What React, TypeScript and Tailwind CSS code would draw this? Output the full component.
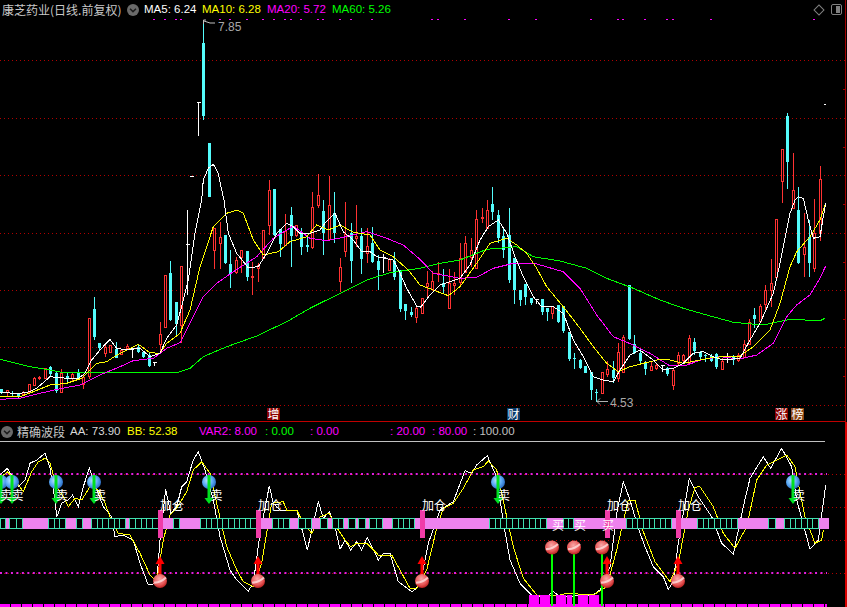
import * as React from 'react';

type Kind = 'r' | 'c' | 'w';
// x, wick top, body top, body bottom, wick bottom (3x crop units, y measured from 200)
type Candle = [number, number, number, number, number, Kind];
type Pt = [number, number];

const CYAN = '#54fcfc';
const RED = '#ff3232';
const CJK = "font-['Noto_Sans_CJK_SC','Liberation_Sans',sans-serif]";
const SANS = "font-['Liberation_Sans','Noto_Sans_CJK_SC',sans-serif]";

const leftCandles: Candle[] = [
  [5, 567, 567, 580, 582, 'c'], [22, 570, 571, 576, 590, 'r'], [38, 572, 578, 580, 590, 'c'], [55, 578, 580, 590, 595, 'c'],
  [70, 574, 575, 582, 584, 'r'], [87, 552, 552, 576, 578, 'r'], [103, 532, 534, 554, 556, 'r'], [118, 527, 531, 535, 540, 'r'],
  [136, 505, 505, 533, 535, 'r'], [151, 497, 502, 522, 530, 'c'], [169, 515, 520, 574, 578, 'c'], [185, 508, 520, 575, 577, 'r'],
  [202, 517, 528, 535, 545, 'c'], [217, 520, 522, 535, 545, 'r'], [235, 507, 520, 535, 540, 'c'], [250, 522, 530, 552, 567, 'r'],
  [267, 355, 355, 528, 537, 'r'], [283, 291, 327, 410, 420, 'c'], [298, 430, 430, 445, 453, 'c'], [316, 430, 441, 460, 471, 'r'],
  [331, 435, 435, 455, 456, 'r'], [349, 425, 447, 473, 473, 'c'], [364, 450, 450, 463, 465, 'r'], [382, 432, 438, 445, 450, 'r'],
  [397, 445, 445, 447, 473, 'w'], [415, 434, 441, 455, 460, 'c'], [430, 452, 455, 470, 475, 'c'], [448, 460, 465, 497, 500, 'c'],
  [464, 487, 487, 489, 498, 'w'], [481, 366, 403, 432, 460, 'r'], [496, 225, 225, 380, 381, 'r'], [511, 183, 219, 360, 362, 'c'],
  [529, 305, 305, 372, 410, 'c'], [545, 198, 198, 375, 430, 'r'], [562, 30, 132, 133, 285, 'w'], [575, -72, -72, -71, -71, 'w'],
  [595, -293, -293, -292, -193, 'w'], [610, -540, -472, -252, -240, 'c'], [628, -171, -171, -10, -10, 'c'], [643, 85, 85, 150, 207, 'r'],
  [660, 65, 112, 130, 207, 'r'], [676, 105, 105, 190, 192, 'c'], [691, 150, 192, 222, 263, 'c'], [709, 172, 180, 215, 222, 'r'],
  [725, 150, 150, 170, 220, 'r'], [742, 153, 153, 230, 242, 'c'], [758, 185, 228, 232, 285, 'r'], [775, 190, 195, 205, 245, 'r'],
  [790, 91, 91, 175, 177, 'r'], [808, -59, -30, 75, 105, 'r'], [823, -33, -33, 105, 107, 'c'], [841, 88, 88, 132, 172, 'c'],
  [857, 42, 92, 135, 137, 'r'], [873, 22, 45, 108, 200, 'c'], [889, 75, 75, 105, 110, 'r'], [905, 85, 95, 140, 165, 'c'],
  [922, 105, 135, 140, 157, 'c'], [938, -24, 22, 140, 147, 'r'], [955, -78, -15, 15, 25, 'r'], [970, 0, 33, 100, 165, 'c'],
  [988, -72, 15, 118, 122, 'r'], [1003, -24, 40, 98, 130, 'c'], [1020, 175, 200, 242, 275, 'r'], [1036, 5, 103, 153, 170, 'r'],
  [1053, 70, 100, 182, 250, 'c'], [1069, 15, 107, 113, 140, 'r'], [1085, 85, 107, 177, 222, 'c'], [1102, 85, 138, 158, 190, 'r'],
  [1118, 82, 130, 185, 190, 'c'], [1135, 165, 183, 210, 270, 'c'], [1150, 163, 170, 172, 218, 'w'], [1168, 175, 178, 210, 212, 'r'],
  [1184, 155, 183, 232, 240, 'c'], [1201, 210, 210, 327, 336, 'c'], [1217, 312, 312, 332, 360, 'c'], [1234, 322, 335, 345, 350, 'c'],
  [1250, 320, 325, 350, 368, 'r'],
];

const rightCandles: Candle[] = [
  [7, 293, 293, 340, 342, 'r'], [22, 212, 250, 258, 295, 'r'], [38, 212, 242, 267, 270, 'r'], [55, 187, 218, 220, 245, 'r'],
  [70, 208, 250, 262, 278, 'c'], [88, 208, 250, 323, 324, 'r'], [103, 215, 250, 256, 285, 'r'], [120, 130, 175, 245, 262, 'r'],
  [136, 107, 130, 215, 217, 'r'], [153, 115, 150, 170, 200, 'r'], [169, 30, 57, 205, 208, 'r'], [186, 25, 50, 55, 70, 'r'],
  [202, 0, 30, 85, 86, 'r'], [217, -39, 12, 35, 60, 'c'], [235, 30, 45, 113, 130, 'c'], [250, 80, 108, 150, 175, 'c'],
  [268, 25, 105, 240, 250, 'c'], [283, 175, 175, 270, 313, 'c'], [300, 270, 270, 300, 318, 'c'], [316, 252, 252, 290, 315, 'c'],
  [333, 293, 293, 310, 315, 'c'], [350, 297, 297, 298, 312, 'w'], [366, 297, 297, 335, 345, 'c'], [382, 323, 323, 335, 362, 'c'],
  [397, 318, 318, 340, 358, 'r'], [415, 315, 315, 365, 368, 'c'], [430, 318, 318, 393, 400, 'c'], [448, 397, 397, 478, 482, 'c'],
  [463, 460, 475, 478, 508, 'c'], [481, 478, 480, 505, 508, 'c'], [496, 497, 497, 518, 520, 'c'], [514, 516, 516, 570, 600, 'c'],
  [529, 568, 575, 580, 605, 'c'], [547, 517, 517, 578, 582, 'r'], [562, 483, 508, 522, 530, 'r'], [580, 483, 510, 535, 548, 'c'],
  [595, 430, 457, 535, 545, 'r'], [611, 405, 410, 515, 518, 'r'], [628, 256, 256, 418, 420, 'c'], [643, 405, 433, 458, 462, 'c'],
  [661, 448, 460, 483, 488, 'c'], [676, 483, 490, 508, 525, 'c'], [694, 485, 497, 510, 511, 'r'], [710, 490, 495, 505, 510, 'r'],
  [727, 495, 495, 496, 515, 'w'], [742, 500, 505, 523, 527, 'c'], [760, 505, 510, 555, 570, 'r'], [775, 455, 465, 490, 495, 'r'],
  [790, 462, 465, 480, 485, 'r'], [808, 405, 415, 490, 495, 'r'], [823, 415, 427, 452, 465, 'c'], [841, 452, 455, 472, 480, 'c'],
  [856, 462, 465, 467, 485, 'c'], [874, 462, 467, 482, 485, 'c'], [889, 460, 462, 502, 507, 'c'], [907, 475, 482, 507, 508, 'r'],
  [922, 460, 470, 472, 490, 'w'], [940, 465, 470, 480, 495, 'c'], [955, 460, 465, 480, 487, 'r'], [973, 420, 432, 470, 475, 'r'],
  [988, 358, 367, 432, 435, 'r'], [1003, 323, 345, 357, 385, 'c'], [1021, 312, 317, 363, 365, 'r'], [1036, 255, 270, 312, 335, 'r'],
  [1053, 178, 250, 270, 320, 'r'], [1069, 58, 58, 230, 235, 'r'], [1087, -152, -152, -56, 10, 'r'], [1102, -260, -252, -114, -33, 'c'],
  [1120, -140, -29, 25, 27, 'r'], [1135, -39, 30, 190, 192, 'c'], [1153, 40, 142, 163, 230, 'r'], [1168, 60, 110, 190, 230, 'c'],
  [1184, -3, 100, 205, 215, 'r'], [1201, -102, -63, 100, 122, 'r'],
];

const ma5: Pt[] = [
  ...scale(0, 200, [[0,578],[60,580],[90,575],[110,565],[150,530],[200,535],[235,535],[255,520],[275,480],[300,450],[330,418],[350,445],[380,450],[420,445],[450,470],[480,460],[500,415],[530,375],[550,300],[565,240],[585,100],[605,0]]),
  ...scale(0, 0, [[610,540],[625,505],[640,493],[655,520],[665,570],[672,600]]),
  ...scale(0, 200, [[685,100],[710,160],[745,203],[775,200],[800,160],[830,100],[860,70],[880,80],[900,100],[930,100],[960,90],[975,70],[1005,40],[1030,95],[1060,120],[1085,155],[1110,155],[1130,170],[1180,180],[1200,220],[1220,265],[1250,318],[1260,318]]),
  ...scale(420, 200, [[0,325],[30,285],[60,255],[90,245],[120,235],[150,195],[180,120],[205,80],[235,60],[260,100],[285,170],[310,230],[340,290],[365,320],[400,320],[430,340],[460,420],[490,470],[520,530],[550,540],[580,545],[600,510],[630,465],[660,450],[700,480],[730,510],[760,505],[790,490],[820,460],[850,455],[880,470],[910,480],[960,475],[990,420],[1020,370],[1060,280],[1080,190],[1110,40],[1125,0],[1135,-10],[1150,-5],[1165,60],[1180,115],[1200,110],[1210,50],[1217,10]]),
];
const ma10: Pt[] = [
  ...scale(0, 200, [[0,590],[60,590],[100,575],[150,555],[200,550],[245,535],[290,490],[320,485],[350,465],[415,433],[450,458],[480,460],[500,430],[540,400],[570,330],[600,200],[640,80],[680,40],[710,30],[730,40],[760,120],[790,165],[835,155],[870,125],[920,110],[950,75],[985,90],[1020,75],[1060,97],[1110,105],[1140,150],[1180,170],[1225,210],[1260,255]]),
  ...scale(420, 200, [[40,270],[85,287],[120,260],[170,190],[210,130],[260,115],[290,135],[320,160],[350,205],[380,260],[430,320],[480,385],[520,440],[560,490],[595,515],[630,500],[670,490],[720,478],[750,480],[790,490],[840,480],[880,472],[960,468],[1000,440],[1050,390],[1080,310],[1110,200],[1130,155],[1170,110],[1200,60],[1217,8]]),
];
const ma20: Pt[] = [
  ...scale(0, 200, [[0,598],[60,595],[120,580],[180,566],[240,555],[300,525],[360,500],[400,482],[460,475],[500,445],[540,428],[570,370],[610,290],[650,250],[700,215],[770,170],[820,115],[880,78],[930,115],[980,122],[1030,112],[1100,95],[1160,115],[1210,135],[1260,178]]),
  ...scale(420, 200, [[40,220],[120,235],[170,232],[220,205],[280,190],[350,192],[430,215],[480,265],[530,345],[580,410],[640,435],[690,460],[750,498],[800,495],[850,478],[900,470],[960,477],[1010,465],[1060,430],[1100,350],[1130,315],[1170,285],[1200,235],[1217,198]]),
];
const ma60: Pt[] = [
  ...scale(0, 200, [[0,478],[90,500],[150,510],[190,518],[490,518],[530,518],[570,505],[610,470],[680,440],[770,408],[860,365],[930,325],[1010,285],[1100,240],[1170,218],[1260,205]]),
  ...scale(420, 200, [[60,190],[120,180],[200,148],[290,140],[340,170],[420,183],[500,205],[560,235],[640,265],[720,300],[790,325],[860,345],[940,367],[1030,375],[1110,358],[1200,362],[1215,355]]),
];

const aa: Pt[] = [
  ...scale(0, 400, [[0,225],[22,205],[40,235],[55,260],[75,240],[90,190],[110,180],[135,160],[150,205],[165,300],[170,352],[185,310],[205,300],[218,285],[235,320],[250,260],[268,205],[285,255],[310,320],[335,350],[345,410],[370,405],[400,420],[420,490],[445,555],[470,550],[480,420],[497,268],[512,340],[530,320],[545,260],[560,245],[580,180],[595,155],[615,210],[640,300],[660,410],[690,510],[710,540],[745,573],[760,550],[780,400],[808,258],[820,310],[840,330]]),
  ...scale(280, 400, [[20,330],[50,330],[65,385],[82,450],[115,305],[130,355],[148,335],[165,380],[180,448],[195,420],[212,450],[230,425],[245,450],[262,412],[295,480],[310,460],[330,460],[355,545],[395,575],[410,565],[425,530],[445,430],[480,330],[520,305],[555,212],[575,220],[590,195],[622,167],[645,220],[660,300],[675,395],[690,480],[720,550],[760,590],[800,590],[820,575]]),
  ...scale(560, 400, [[0,590],[100,585],[120,570],[150,500],[170,340],[190,245],[210,300],[235,385],[255,440],[280,500],[310,530],[325,568],[340,545],[355,430],[388,235],[415,290],[455,350],[485,430],[520,462],[550,320],[570,235],[610,170],[632,205],[665,145],[695,200],[710,300],[750,448],[775,420],[797,255]]),
];
const bb: Pt[] = [
  ...scale(0, 400, [[0,235],[22,215],[40,235],[70,275],[95,215],[115,185],[135,175],[150,190],[170,260],[190,290],[205,320],[225,295],[245,300],[270,260],[295,270],[315,310],[330,350],[355,400],[390,405],[420,460],[450,525],[470,545],[490,420],[510,345],[530,325],[560,275],[580,210],[605,185],[630,220],[650,310],[680,440],[710,510],[730,545],[760,560],[785,490],[815,310],[850,305]]),
  ...scale(280, 400, [[20,330],[50,330],[65,360],[95,400],[120,350],[148,340],[165,375],[195,420],[212,440],[230,430],[260,430],[295,465],[335,465],[390,565],[410,565],[440,510],[470,385],[490,325],[520,310],[550,265],[580,210],[610,200],[625,183],[650,210],[680,350],[700,440],[730,535],[770,585],[840,585]]),
  ...scale(560, 400, [[20,580],[100,585],[140,560],[170,450],[205,300],[225,300],[250,395],[285,485],[330,545],[355,490],[385,330],[405,262],[420,260],[460,320],[490,400],[525,445],[560,380],[590,240],[620,195],[680,165],[705,200],[735,350],[765,430],[785,420],[790,390]]),
];

const dots = [154, 165, 176, 181, 220, 230, 247, 263, 274, 285, 291, 301, 318, 323, 340, 351, 372, 432, 438, 465, 509, 536, 591, 618, 623, 645, 667, 673, 711, 814];
// start, end, number of cells
const cells: [number, number, number][] = [
  [0, 5, 1], [9, 22, 2], [48, 65, 3], [76, 82, 1], [91, 125, 6], [129, 158, 5], [173, 179, 1], [200, 256, 10], [272, 289, 3],
  [298, 311, 2], [320, 327, 1], [332, 343, 2], [348, 355, 1], [358, 365, 1], [369, 382, 2], [392, 414, 4], [489, 546, 10],
  [563, 573, 2], [626, 671, 8], [697, 737, 7], [768, 775, 1], [784, 818, 6],
];
const addBars = [158, 256, 420, 605, 676];
const addLabels = [160, 258, 422, 607, 678];
const redBalls = [160, 258, 422, 607, 678];
const blueBalls = [1, 12, 56, 94, 209, 498, 793];
const sellLabels = [0, 11.5, 56, 94, 210.5, 498, 793];
const buyPins = [552, 574, 602];
const volBlocks: [number, number][] = [[529, 10], [540, 10], [556, 10], [567, 5], [578, 10], [589, 10]];

function scale(ox: number, oy: number, pts: Pt[]): Pt[] {
  return pts.map(([x, y]) => [ox + x / 3, oy + y / 3]);
}

const toPoints = (pts: Pt[]) => pts.map(([x, y]) => `${x.toFixed(1)},${y.toFixed(1)}`).join(' ');

function Chevron({ className }: { className: string }) {
  return (
    <svg viewBox="0 0 12 12" className={className}>
      <circle cx="6" cy="6" r="6" fill="#6a6a6a" />
      <path d="M3 4.8 L6 7.6 L9 4.8" fill="none" stroke="#1c1c1c" strokeWidth="1.5" />
    </svg>
  );
}

function Line({ pts, color }: { pts: Pt[]; color: string }) {
  return <polyline points={toPoints(pts)} fill="none" stroke={color} strokeWidth="1" shapeRendering="crispEdges" />;
}

function CandleMark({ c, ox }: { c: Candle; ox: number }) {
  const [zx, wt, bt, bb2, wb, kind] = c;
  const x = Math.floor(ox + zx / 3) + 0.5;
  const y = (v: number) => Math.round(200 + v / 3);
  const color = kind === 'r' ? RED : kind === 'c' ? CYAN : '#ffffff';
  return (
    <g shapeRendering="crispEdges">
      <line x1={x} x2={x} y1={y(wt)} y2={y(wb)} stroke={color} />
      {kind === 'c' && <rect x={x - 1.5} y={y(bt)} width={3} height={Math.max(1, y(bb2) - y(bt))} fill={color} />}
      {kind === 'r' && <rect x={x - 1} y={y(bt) + 0.5} width={2} height={Math.max(1, y(bb2) - y(bt))} fill="#000" stroke={color} />}
      {kind === 'w' && <line x1={x - 2} x2={x + 2} y1={y(bt) + 0.5} y2={y(bt) + 0.5} stroke={color} />}
    </g>
  );
}

function TopChart() {
  const gridY = [60.5, 118.5, 175.5, 233.5, 290.5, 347.5, 405.5];
  return (
    <svg viewBox="0 19 845 402" className="block w-[845px] h-[402px]">
      {gridY.map((y) => (
        <line key={y} x1="0" x2="845" y1={y} y2={y} stroke="#b00000" strokeDasharray="1 3" />
      ))}
      {[89.5, 147.5, 204.5, 262.5, 319.5, 376.5].map((y) => (
        <line key={y} x1="843" x2="845" y1={y} y2={y} stroke="#a00000" />
      ))}
      {dots.map((x) => (
        <rect key={x} x={x - 1} y="18" width="2" height="2" fill="#ff00ff" />
      ))}
      {leftCandles.map((c, i) => <CandleMark key={i} c={c} ox={0} />)}
      {rightCandles.map((c, i) => <CandleMark key={i} c={c} ox={420} />)}
      <rect x="824" y="104" width="2" height="1" fill="#fff" />
      <Line pts={ma60} color="#00ff00" />
      <Line pts={ma20} color="#ff00ff" />
      <Line pts={ma10} color="#ffff00" />
      <Line pts={ma5} color="#ffffff" />

      <path d="M203.5 24 V20 H206 M204 21 L210 23 L215 23" fill="none" stroke="#c0c0c0" />
      <text x="218" y="31" fontSize="12" fill="#a8a8a8" className={SANS}>7.85</text>
      <path d="M608 401.5 H597 M600 398.5 L597 401.5 L600 404.5" fill="none" stroke="#b0b0b0" />
      <text x="610" y="407" fontSize="12" fill="#a8a8a8" className={SANS}>4.53</text>

      <Tag x={267} text="增" bg="#8b0000" />
      <Tag x={507} text="财" bg="#0a3a6a" />
      <Tag x={775} text="涨" bg="#8b0000" />
      <Tag x={791} text="榜" bg="#8b4513" />
    </svg>
  );
}

function Tag({ x, text, bg }: { x: number; text: string; bg: string }) {
  return (
    <g>
      <rect x={x} y="408" width="13" height="12" fill={bg} />
      <text x={x + 0.5} y="418.5" fontSize="12" fill="#fff" className={CJK}>{text}</text>
    </g>
  );
}

function RedBall({ x, y }: { x: number; y: number }) {
  return (
    <g>
      <circle cx={x} cy={y} r="7" fill="url(#redBall)" />
      <path d={`M${x - 6} ${y + 1.5} Q${x} ${y + 2} ${x + 6} ${y - 3.5}`} fill="none" stroke="#ffe4e4" strokeWidth="2.2" opacity="0.75" />
    </g>
  );
}

function BottomChart() {
  return (
    <svg viewBox="0 442 845 165" className="block w-[845px] h-[165px]">
      <defs>
        <radialGradient id="redBall" cx="45%" cy="35%" r="65%">
          <stop offset="0%" stopColor="#f8a8a8" />
          <stop offset="65%" stopColor="#e85858" />
          <stop offset="100%" stopColor="#b82020" />
        </radialGradient>
        <radialGradient id="blueBall" cx="40%" cy="40%" r="65%">
          <stop offset="0%" stopColor="#b8e4ff" />
          <stop offset="55%" stopColor="#5aa8f4" />
          <stop offset="100%" stopColor="#2868c0" />
        </radialGradient>
      </defs>

      {[474.5, 507.5, 540.5, 573.5].map((y) => (
        <line key={y} x1="0" x2="845" y1={y} y2={y} stroke="#b00000" strokeDasharray="1 3" />
      ))}
      {[474, 573].map((y) => (
        <line key={y} x1="0" x2="827" y1={y} y2={y} stroke="#e020e0" strokeWidth="2" strokeDasharray="2 3.47" />
      ))}

      <Line pts={aa} color="#ffffff" />
      <Line pts={bb} color="#ffff00" />

      <line x1="0" x2="827" y1="605.5" y2="605.5" stroke="#ff00ff" strokeWidth="3" strokeDasharray="10 1" />
      {volBlocks.map(([x, w]) => (
        <rect key={x} x={x} y="595" width={w} height="12" fill="#ff00ff" />
      ))}

      <rect x="0" y="518" width="829" height="11" fill="#ee82ee" />
      {cells.map(([start, end, n]) => (
        <g key={start} shapeRendering="crispEdges">
          <rect x={start + 0.5} y="518.5" width={end - start} height="10" fill="#000" stroke="#40e0b0" />
          {Array.from({ length: n - 1 }, (_, i) => {
            const x = Math.round(start + ((end - start) / n) * (i + 1)) + 0.5;
            return <line key={i} x1={x} x2={x} y1="518" y2="529" stroke="#40e0b0" />;
          })}
        </g>
      ))}
      {addBars.map((x) => (
        <rect key={x} x={x} y="510" width="5" height="28" fill="#f03ca8" />
      ))}

      {addLabels.map((x) => (
        <text key={x} x={x} y="510" fontSize="12" fill="#fff" className={CJK}>加仓</text>
      ))}
      {buyPins.map((x) => (
        <g key={x}>
          <line x1={x} x2={x} y1="541" y2="606" stroke="#00ff00" strokeWidth="2" />
          <RedBall x={x} y={547.5} />
        </g>
      ))}
      {[552, 574, 602].map((x) => (
        <text key={x} x={x} y="529.5" fontSize="12" fill="#fff" className={CJK}>买</text>
      ))}
      {redBalls.map((x) => (
        <g key={x}>
          <path d={`M${x - 1.5} 575 V564 H${x - 4.5} L${x} 556 L${x + 4.5} 564 H${x + 1.5} V575 Z`} fill="#ff0000" />
          <RedBall x={x} y={581} />
        </g>
      ))}
      {blueBalls.map((x) => (
        <g key={x}>
          <circle cx={x} cy="482" r="7" fill="url(#blueBall)" />
          <path d={`M${x - 1.5} 475 V498 H${x - 4.5} L${x} 504 L${x + 4.5} 498 H${x + 1.5} V475 Z`} fill="#00e020" />
        </g>
      ))}
      {sellLabels.map((x) => (
        <text key={x} x={x} y="499.5" fontSize="12" fill="#fff" className={CJK}>卖</text>
      ))}
    </svg>
  );
}

export default function App() {
  const legend = [
    { text: 'MA5: 6.24', cls: 'w-[58px] text-white' },
    { text: 'MA10: 6.28', cls: 'w-[65px] text-[#ffff00]' },
    { text: 'MA20: 5.72', cls: 'w-[65px] text-[#ff00ff]' },
    { text: 'MA60: 5.26', cls: 'w-[65px] text-[#00ff00]' },
  ];
  const lower = [
    { text: 'AA: 73.90', cls: 'w-[57px] text-[#d8d8d8]' },
    { text: 'BB: 52.38', cls: 'w-[72px] text-[#ffff00]' },
    { text: 'VAR2: 8.00', cls: 'w-[66px] text-[#ff00ff]' },
    { text: ': 0.00', cls: 'w-[45px] text-[#00ff00]' },
    { text: ': 0.00', cls: 'w-[80px] text-[#ff00ff]' },
    { text: ': 20.00', cls: 'w-[42px] text-[#ff00ff]' },
    { text: ': 80.00', cls: 'w-[41px] text-[#ff00ff]' },
    { text: ': 100.00', cls: 'text-[#c0c0c0]' },
  ];

  return (
    <div className={`w-[847px] h-[607px] bg-black overflow-hidden text-[11.5px] leading-none ${SANS}`}>
      <div className="w-[846px] h-[422px] border-r border-b border-r-[#a00000] border-b-[#c00000]">
        <div className="h-[19px] flex items-center">
          <span className={`w-[127px] pl-[2px] whitespace-nowrap text-[#c8c8c8] text-[12px] ${CJK}`}>康芝药业(日线.前复权)</span>
          <Chevron className="w-[12px] h-[12px] mr-[5px]" />
          {legend.map((l) => (
            <span key={l.text} className={`whitespace-nowrap ${l.cls}`}>{l.text}</span>
          ))}
          <div className="ml-auto mr-[3px] flex items-center gap-[8px]">
            <div className="w-[8px] h-[8px] rotate-45 border border-[#808080]" />
            <div className="w-[11px] h-[11px] rounded-[2px] border border-[#808080] p-px flex justify-end">
              <div className="w-[4px] bg-[#808080]" />
            </div>
          </div>
        </div>
        <TopChart />
      </div>
      <div className="w-[847px] h-[185px] border-r-2 border-r-[#d80000]">
        <div className="w-[825px] h-[20px] border-b border-[#c0c0c0] flex items-center">
          <Chevron className="w-[12px] h-[12px] ml-[1px] mr-[4px]" />
          <span className={`w-[53px] text-[#c8c8c8] text-[12px] ${CJK}`}>精确波段</span>
          {lower.map((l, i) => (
            <span key={i} className={`whitespace-nowrap ${l.cls}`}>{l.text}</span>
          ))}
        </div>
        <BottomChart />
      </div>
    </div>
  );
}
